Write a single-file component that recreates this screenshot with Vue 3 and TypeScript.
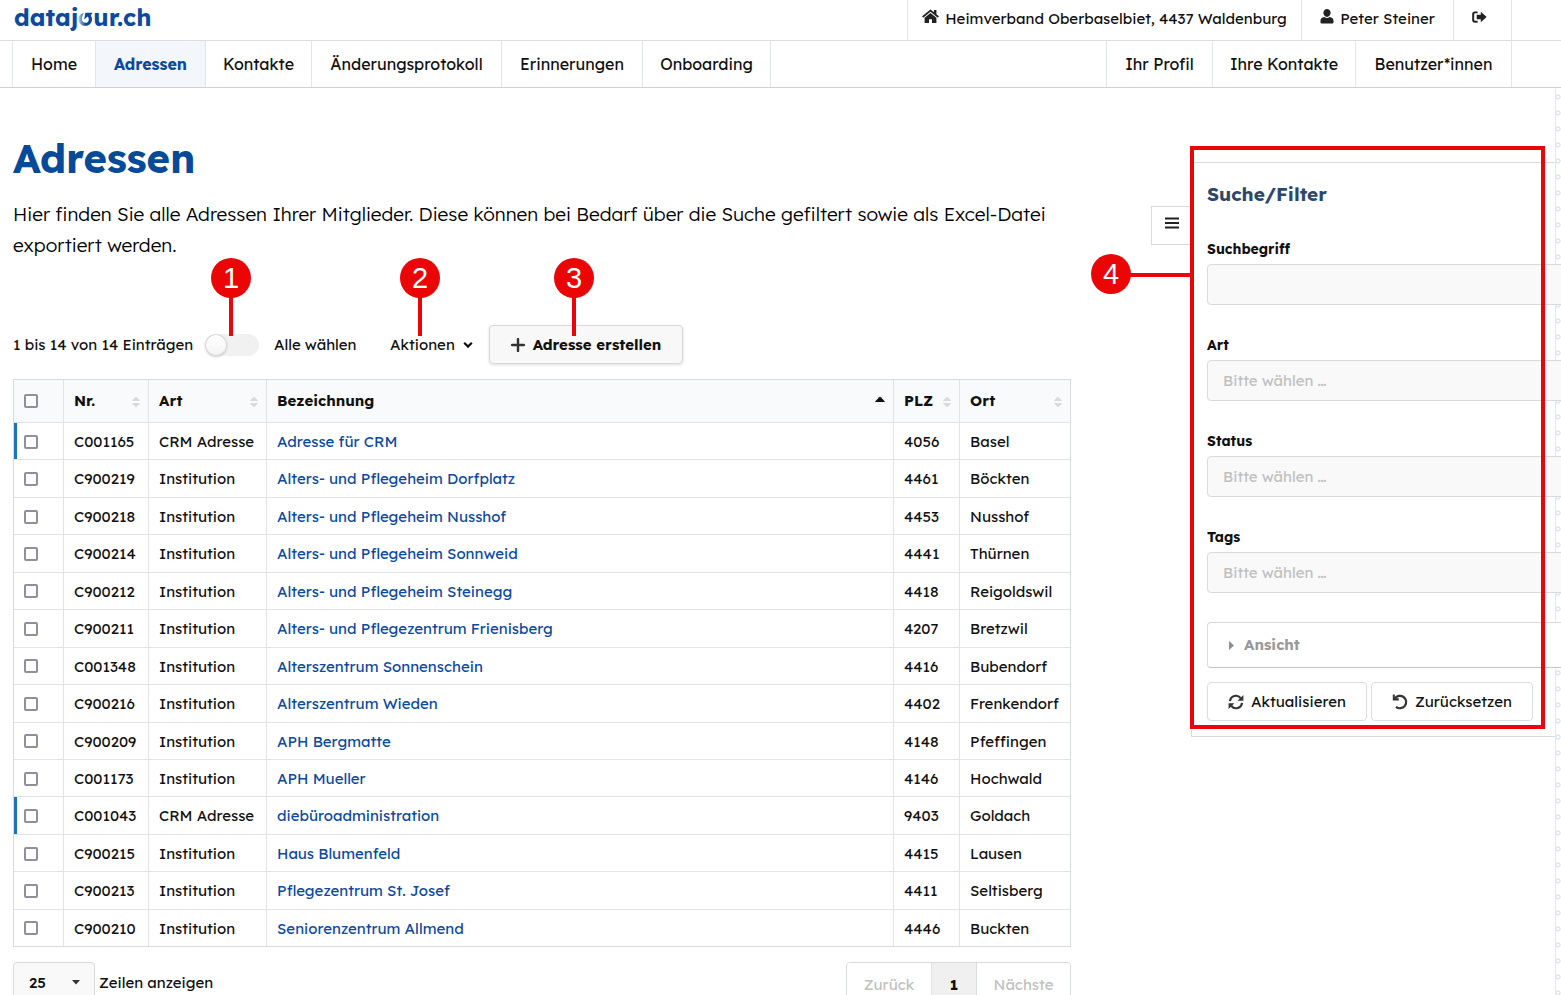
<script setup lang="ts">
import { ref } from 'vue'

interface Row { nr: string; art: string; name: string; plz: string; ort: string }

const mainNav = ['Home', 'Adressen', 'Kontakte', 'Änderungsprotokoll', 'Erinnerungen', 'Onboarding']
const userNav = ['Ihr Profil', 'Ihre Kontakte', 'Benutzer*innen']
const columns = [
  { key: 'nr', label: 'Nr.' },
  { key: 'art', label: 'Art' },
  { key: 'name', label: 'Bezeichnung' },
  { key: 'plz', label: 'PLZ' },
  { key: 'ort', label: 'Ort' },
]
const inst = 'Institution'
const crm = 'CRM Adresse'
const rows: Row[] = [
  { nr: 'C001165', art: crm, name: 'Adresse für CRM', plz: '4056', ort: 'Basel' },
  { nr: 'C900219', art: inst, name: 'Alters- und Pflegeheim Dorfplatz', plz: '4461', ort: 'Böckten' },
  { nr: 'C900218', art: inst, name: 'Alters- und Pflegeheim Nusshof', plz: '4453', ort: 'Nusshof' },
  { nr: 'C900214', art: inst, name: 'Alters- und Pflegeheim Sonnweid', plz: '4441', ort: 'Thürnen' },
  { nr: 'C900212', art: inst, name: 'Alters- und Pflegeheim Steinegg', plz: '4418', ort: 'Reigoldswil' },
  { nr: 'C900211', art: inst, name: 'Alters- und Pflegezentrum Frienisberg', plz: '4207', ort: 'Bretzwil' },
  { nr: 'C001348', art: inst, name: 'Alterszentrum Sonnenschein', plz: '4416', ort: 'Bubendorf' },
  { nr: 'C900216', art: inst, name: 'Alterszentrum Wieden', plz: '4402', ort: 'Frenkendorf' },
  { nr: 'C900209', art: inst, name: 'APH Bergmatte', plz: '4148', ort: 'Pfeffingen' },
  { nr: 'C001173', art: inst, name: 'APH Mueller', plz: '4146', ort: 'Hochwald' },
  { nr: 'C001043', art: crm, name: 'diebüroadministration', plz: '9403', ort: 'Goldach' },
  { nr: 'C900215', art: inst, name: 'Haus Blumenfeld', plz: '4415', ort: 'Lausen' },
  { nr: 'C900213', art: inst, name: 'Pflegezentrum St. Josef', plz: '4411', ort: 'Seltisberg' },
  { nr: 'C900210', art: inst, name: 'Seniorenzentrum Allmend', plz: '4446', ort: 'Buckten' },
]
const selects = ['Art', 'Status', 'Tags']
const allSelected = ref(false)
const term = ref('')
</script>

<template>
  <div class="page">
    <header class="topbar">
      <a class="logo" href="#" aria-label="datajour.ch">
        <span>dataj</span><svg class="logo-o" viewBox="0 0 14 14" aria-hidden="true">
          <defs>
            <linearGradient id="swirl" x1="0" y1="0" x2="1" y2="0">
              <stop offset="0" stop-color="#b9cce4" />
              <stop offset="0.5" stop-color="#0b4a99" />
            </linearGradient>
          </defs>
          <path d="M5.500.8C2.200 1.600 0 4.100 0 7.400 0 11 2.900 13.800 6.800 13.800s6.700-2.800 6.700-6.400c0-1.500-.4-2.800-1.200-3.900L14 .8H6.800L5.600 7.600l2.100-1.900 1.400-1.300c.8.700 1.200 1.700 1.200 3 0 2-1.400 3.400-3.400 3.400S3.500 9.300 3.500 7.200c0-2.500.5-4.600 2-6.400z" fill="url(#swirl)" />
        </svg><span>ur.ch</span>
      </a>
      <nav class="account" aria-label="Konto">
        <a class="cell org" href="#">
          <svg class="icon house" viewBox="0 0 18 16" aria-hidden="true"><path d="M9 .4 0 7.800l1.200 1.500L9 2.900l7.800 6.400L18 7.800l-2.700-2.200V1h-2.600v2.400zM9 4.200 2.700 9.400V15H7.400v-4.200h3.200V15h4.700V9.400z" /></svg>
          <span>Heimverband Oberbaselbiet, 4437 Waldenburg</span>
        </a>
        <a class="cell user" href="#">
          <svg class="icon person" viewBox="0 0 14 16" aria-hidden="true"><path d="M7 0a3.900 3.900 0 0 1 3.900 4.100C10.900 6.300 9.300 8.500 7 8.500S3.100 6.300 3.100 4.100A3.900 3.900 0 0 1 7 0zM4.200 8.600a4.600 4.600 0 0 0 5.600 0C12.500 8.900 14 10.500 14 13v1q0 1.500-1.500 1.500h-11Q0 15.500 0 14v-1c0-2.500 1.500-4.100 4.200-4.400z" /></svg>
          <span>Peter Steiner</span>
        </a>
        <a class="cell exit" href="#" aria-label="Abmelden">
          <svg class="icon signout" viewBox="0 0 16 14" aria-hidden="true"><path d="M6 1v2H3.300Q2.300 3 2.300 4v6q0 1 1 1H6v2H3Q.2 13 .2 10.200V3.800Q.2 1 3 1zM9.400 1.400 15.600 7l-6.200 5.600V9.400H5V4.600h4.400z" /></svg>
        </a>
      </nav>
    </header>

    <nav class="navbar" aria-label="Hauptnavigation">
      <div class="nav-group main-nav">
        <a v-for="item in mainNav" :key="item" href="#" class="nav-item" :class="{ active: item === 'Adressen' }">{{ item }}</a>
      </div>
      <div class="nav-group user-nav">
        <a v-for="item in userNav" :key="item" href="#" class="nav-item">{{ item }}</a>
      </div>
    </nav>

    <div class="body">
      <main class="content">
        <h1>Adressen</h1>
        <p class="intro">Hier finden Sie alle Adressen Ihrer Mitglieder. Diese können bei Bedarf über die Suche gefiltert sowie als Excel-Datei exportiert werden.</p>

        <div class="toolbar">
          <span class="count">1 bis 14 von 14 Einträgen</span>
          <label class="toggle anchor">
            <input v-model="allSelected" type="checkbox" class="switch" />
            <span>Alle wählen</span>
            <span class="marker m1">1</span>
          </label>
          <button type="button" class="actions anchor">
            Aktionen
            <svg class="chevron" viewBox="0 0 10 8" aria-hidden="true"><path d="M1.200 1.800 5 5.600l3.800-3.800" fill="none" stroke="#111" stroke-width="2.200" /></svg>
            <span class="marker m2">2</span>
          </button>
          <button type="button" class="create anchor">
            <svg class="plus" viewBox="0 0 14 14" aria-hidden="true"><path d="M7 1v12M1 7h12" stroke="#333" stroke-width="2.400" stroke-linecap="round" /></svg>
            Adresse erstellen
            <span class="marker m3">3</span>
          </button>
        </div>

        <table>
          <colgroup>
            <col class="c-check" /><col class="c-nr" /><col class="c-art" /><col /><col class="c-plz" /><col class="c-ort" />
          </colgroup>
          <thead>
            <tr>
              <th scope="col"><input type="checkbox" class="box" aria-label="Alle Zeilen" /></th>
              <th v-for="c in columns" :key="c.key" scope="col">
                <div class="head">
                  <span>{{ c.label }}</span>
                  <svg v-if="c.key === 'name'" class="sorted" viewBox="0 0 10 12" aria-hidden="true"><path d="M1 7Q-.4 7 .6 5.900L4.200 2.200Q5 1.500 5.800 2.200L9.400 5.900Q10.400 7 9 7z" fill="#111" /></svg>
                  <svg v-else class="sort" viewBox="0 0 8 12" aria-hidden="true"><path d="M1 5Q-.4 5 .5 4L3.300 1.200Q4 .5 4.700 1.200L7.500 4Q8.400 5 7 5zM1 7Q-.4 7 .5 8l2.800 2.800q.7.700 1.400 0L7.500 8Q8.400 7 7 7z" fill="#d9dadc" /></svg>
                </div>
              </th>
            </tr>
          </thead>
          <tbody>
            <tr v-for="r in rows" :key="r.nr" :class="{ crm: r.art === crm }">
              <td><input type="checkbox" class="box" :aria-label="r.name" /></td>
              <td>{{ r.nr }}</td>
              <td>{{ r.art }}</td>
              <td><a href="#">{{ r.name }}</a></td>
              <td>{{ r.plz }}</td>
              <td>{{ r.ort }}</td>
            </tr>
          </tbody>
        </table>

        <div class="footer">
          <label class="length">
            <span class="select-wrap">
              <select><option>25</option></select>
              <svg class="caret" viewBox="0 0 8 5" aria-hidden="true"><path d="M0 0h8L4 4.500z" fill="#333" /></svg>
            </span>
            Zeilen anzeigen
          </label>
          <div class="pager">
            <button type="button" disabled>Zurück</button>
            <button type="button" class="current">1</button>
            <button type="button" disabled>Nächste</button>
          </div>
        </div>
      </main>

      <aside class="side">
        <button type="button" class="burger" aria-label="Filter umschalten">
          <svg viewBox="0 0 14 12" aria-hidden="true"><path d="M0 1.500h14M0 6h14M0 10.500h14" stroke="#222" stroke-width="2" /></svg>
        </button>
        <form class="panel" @submit.prevent>
          <h2>Suche/Filter</h2>
          <div class="field">
            <label for="term">Suchbegriff</label>
            <input id="term" v-model="term" type="text" />
          </div>
          <div v-for="s in selects" :key="s" class="field">
            <label :for="'f-' + s">{{ s }}</label>
            <select :id="'f-' + s"><option>Bitte wählen …</option></select>
          </div>
          <button type="button" class="accordion">
            <svg viewBox="0 0 5 9" aria-hidden="true"><path d="M0 0v9l5-4.500z" fill="#8f8f8f" /></svg>
            Ansicht
          </button>
          <div class="buttons">
            <button type="submit">
              <svg viewBox="0 0 16 16" aria-hidden="true"><path d="M2 7.200A6 6 0 0 1 12.600 4M14 8.800A6 6 0 0 1 3.400 12" fill="none" stroke="#333" stroke-width="2.200" /><path d="M15.400 1v5.800H9.600zM.6 15V9.200h5.800z" fill="#333" /></svg>
              Aktualisieren
            </button>
            <button type="reset">
              <svg viewBox="0 0 16 16" aria-hidden="true"><path d="M2.800 4.600A6.200 6.200 0 1 1 4 12.800" fill="none" stroke="#333" stroke-width="2.200" /><path d="M.8.600h2v3.600h4v2.200h-6z" fill="#333" /></svg>
              Zurücksetzen
            </button>
          </div>
        </form>
        <div class="frame"><span class="marker m4">4</span></div>
      </aside>
    </div>
  </div>
</template>

<style>
html { overflow-x: hidden; }
body { margin: 0; background: #fff; }
</style>

<style scoped>
* { box-sizing: border-box; }
.page {
  min-height: 100vh;
  overflow: hidden;
  font: 15px/1.43 Lexend, Inter, "Open Sans", sans-serif;
  color: #111;
}
button, input, select { font: inherit; color: inherit; }
button { cursor: pointer; }
a { color: #0b4a9f; text-decoration: none; }
.topbar, .navbar {
  display: flex;
  justify-content: space-between;
  padding: 0 49px 0 12px;
  border-bottom: 1px solid #dcdddf;
}
.topbar { height: 41px; }
.navbar { height: 47px; border-color: #d0d1d3; font-size: 16px; }
.logo {
  display: flex;
  align-items: center;
  height: 34px;
  padding-left: 2px;
  font-size: 24px;
  font-weight: 700;
}
.logo-o { width: 15px; height: 14px; margin-top: 4px; }
.account { display: flex; }
.cell {
  display: flex;
  align-items: center;
  justify-content: center;
  gap: 6px;
  padding-bottom: 3px;
  border-left: 1px solid #e4e5e6;
  color: #111;
}
.org { width: 394px; }
.user { width: 152px; }
.exit { width: 59px; border-right: 1px solid #e4e5e6; padding-right: 6px; padding-bottom: 7px; }
.icon { fill: #222; margin-bottom: 4px; }
.house { width: 17px; height: 15px; }
.person { width: 14px; height: 15px; }
.signout { width: 15px; height: 14px; margin: 0; }
.nav-group { display: grid; border-left: 1px solid #e4e5e6; }
.main-nav { grid-template-columns: 83px 110px 106px 190px 141px 128px; }
.user-nav { grid-template-columns: 106px 143px 156px; }
.nav-item {
  display: flex;
  align-items: center;
  justify-content: center;
  border-right: 1px solid #e4e5e6;
  color: #111;
}
.nav-item.active { background: #f3f7fb; color: #0b4a99; font-weight: 700; }
.body { display: flex; align-items: flex-start; }
.content { flex: 1; min-width: 0; padding: 46px 0 0 13px; }
h1 { margin: 0; font-size: 40px; line-height: 48px; color: #064a98; }
.intro { margin: 17px 0 0; font-size: 19px; font-weight: 340; line-height: 31px; color: #000; }
.toolbar { display: flex; align-items: center; height: 39px; margin-top: 64px; }
.anchor { position: relative; }
.count { width: 192px; white-space: nowrap; }
.toggle { display: flex; align-items: center; gap: 15px; width: 185px; }
.switch {
  appearance: none;
  width: 54px;
  height: 22px;
  margin: 0;
  border-radius: 11px;
  background: #f1f1f1;
}
.switch::before {
  content: "";
  display: block;
  width: 22px;
  height: 22px;
  border-radius: 50%;
  background: linear-gradient(#fff, #f4f4f4);
  box-shadow: 0 1px 2px #0003, 0 0 0 1px #d8d8d8 inset;
}
.actions {
  display: flex;
  align-items: center;
  gap: 8px;
  width: 99px;
  padding: 0;
  border: 0;
  background: none;
}
.chevron { width: 10px; height: 8px; }
.create {
  display: flex;
  align-items: center;
  justify-content: center;
  gap: 8px;
  width: 194px;
  height: 39px;
  padding: 0;
  border: 1px solid #d8d9da;
  border-radius: 4px;
  background: #f8f8f8;
  font-weight: 700;
  box-shadow: 0 1px 3px #0002;
}
.plus { width: 14px; height: 14px; }
table {
  width: 100%;
  margin-top: 15px;
  table-layout: fixed;
  border-collapse: separate;
  border-spacing: 0;
  border: 1px solid #d8dadc;
}
.c-check { width: 49px; }
.c-nr { width: 85px; }
.c-art { width: 118px; }
.c-plz { width: 66px; }
.c-ort { width: 111px; }
th, td { padding: 8px 0 7px 10px; border-left: 1px solid #e2e3e5; text-align: left; white-space: nowrap; }
td { border-top: 1px solid #e2e3e5; }
th { height: 42px; padding: 7px 0 8px 10px; background: #f9fafb; font-weight: 700; }
th:first-child, td:first-child { border-left: 0; }
tr.crm td:first-child { box-shadow: 3px 0 #1b75bb inset; }
.head { display: flex; align-items: center; justify-content: space-between; padding-right: 8px; }
.sort { width: 8px; height: 12px; margin-top: 3px; }
.sorted { width: 10px; height: 12px; }
.box {
  appearance: none;
  display: block;
  width: 14px;
  height: 14px;
  margin: 0;
  border: 2px solid #8f8f9d;
  border-radius: 2px;
  background: #fff;
}
.footer { display: flex; align-items: flex-start; justify-content: space-between; margin-top: 15px; }
.length { display: flex; align-items: center; gap: 4px; }
.select-wrap { position: relative; }
.select-wrap select {
  appearance: none;
  display: block;
  width: 82px;
  height: 42px;
  padding: 0 15px;
  border: 1px solid #d8dadc;
  border-radius: 4px;
  background: #f9f9f9;
  font-weight: 500;
}
.caret { position: absolute; right: 15px; top: 18px; width: 8px; height: 5px; pointer-events: none; }
.pager { display: flex; height: 45px; border: 1px solid #d8dadc; border-radius: 4px; overflow: hidden; }
.pager button { padding: 0; border: 0; background: #fff; width: 93px; }
.pager button:first-child { width: 84px; }
.pager button:disabled { color: #c0c0c0; }
.pager .current { width: 46px; background: #f0f0f0; border-left: 1px solid #e2e3e5; border-right: 1px solid #d8dadc; font-weight: 700; }
.side {
  position: relative;
  display: flex;
  align-self: stretch;
  flex: none;
  width: 490px;
  padding: 74px 0 0 80px;
}
.side::after {
  content: "";
  position: absolute;
  top: 0;
  right: 0;
  bottom: 0;
  width: 5px;
  border-left: 1px solid #e3e8f0;
  background: radial-gradient(circle at 2px 8px, #fff 1px, #d3dbe8 2px, #fff 3px) 0 1px / 16px 16px;
}
.burger {
  width: 40px;
  height: 39px;
  margin-top: 44px;
  padding: 0 0 4px;
  border: 1px solid #d8dadc;
  border-right: 0;
  background: #fff;
}
.burger svg { width: 14px; height: 12px; }
.panel {
  width: 366px;
  height: 575px;
  padding: 17px 0 0 15px;
  border: 1px solid #d8dadc;
  border-right: 0;
}
h2 { margin: 0 0 30px; font-size: 19px; line-height: 28px; color: #2c476b; }
.field { position: relative; z-index: 1; width: 390px; margin-bottom: 29px; }
.field label { display: block; margin-bottom: 4px; font-size: 14px; line-height: 22px; font-weight: 700; }
.field input, .field select {
  appearance: none;
  display: block;
  width: 100%;
  height: 41px;
  padding: 0 15px;
  border: 1px solid #d8dadc;
  border-radius: 4px;
  background: #f9f9f9;
  color: #c0c0c0;
}
.accordion {
  position: relative;
  z-index: 1;
  display: flex;
  align-items: center;
  gap: 10px;
  width: 390px;
  height: 46px;
  padding: 0 21px;
  border: 1px solid #d8dadc;
  border-bottom-color: #c4c5c7;
  border-radius: 4px;
  background: #fff;
  color: #999;
  font-weight: 700;
}
.accordion svg { width: 5px; height: 9px; }
.buttons { display: flex; gap: 4px; margin-top: 14px; }
.buttons button {
  display: flex;
  align-items: center;
  justify-content: center;
  gap: 7px;
  height: 39px;
  padding: 0 20px;
  border: 1px solid #dcdddf;
  border-radius: 4px;
  background: #fff;
}
.buttons svg { width: 16px; height: 16px; }
.marker {
  position: absolute;
  z-index: 3;
  display: flex;
  align-items: center;
  justify-content: center;
  width: 40px;
  height: 40px;
  border-radius: 50%;
  background: #ea0606;
  color: #fff;
  font: 400 29px/40px "Liberation Sans", Arial, sans-serif;
}
.marker::after { content: ""; position: absolute; top: 39px; left: 18px; width: 4px; height: 39px; background: #ea0606; }
.m1 { left: 6px; bottom: 58px; }
.m2 { left: 10px; bottom: 57px; }
.m3 { left: 64px; bottom: 65px; }
.m4 { left: -103px; top: 104px; }
.m4::after { top: 19px; left: 38px; width: 61px; height: 4px; }
.frame {
  position: absolute;
  z-index: 2;
  top: 58px;
  left: 119px;
  width: 355px;
  height: 583px;
  border: 4px solid #ea0606;
  pointer-events: none;
}
</style>
